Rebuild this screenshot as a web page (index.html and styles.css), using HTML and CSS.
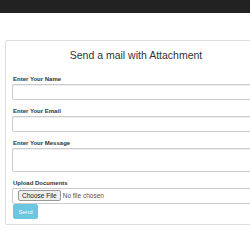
FILE: index.html
```html
<!DOCTYPE html>
<html lang="en">

<head>
    <meta charset="UTF-8">
    <meta name="viewport" content="width=device-width, initial-scale=1.0">
    <title>Send a mail with Attachment</title>
    <link rel="stylesheet" href="styles.css">
</head>

<body>
    <div class="navbar"></div>

    <div class="panel">
        <h3>Send a mail with Attachment</h3>

        <form class="mail-form">
            <div class="form-group">
                <label for="name">Enter Your Name</label>
                <input type="text" id="name" class="form-control">
            </div>

            <div class="form-group">
                <label for="email">Enter Your Email</label>
                <input type="text" id="email" class="form-control">
            </div>

            <div class="form-group">
                <label for="message">Enter Your Message</label>
                <textarea id="message" class="form-control message"></textarea>
            </div>

            <div class="form-group upload">
                <label for="attachment">Upload Documents</label>
                <input type="file" id="attachment" class="form-control file">
            </div>

            <button type="button" class="btn-send">Send</button>
        </form>
    </div>
</body>

</html>
```

FILE: styles.css
```css
* {
    box-sizing: border-box;
    font-family: 'Liberation Sans', Arial, sans-serif;
}

html,
body {
    overflow: hidden;
}

body {
    margin: 0;
    padding: 0;
    background-color: #fff;
    color: #333;
}

.navbar {
    height: 13px;
    background-color: #222;
}

.panel {
    width: 262px;
    margin: 27px 0 0 5px;
    padding: 7px 6px 5px 6px;
    border: 1px solid #ddd;
    border-radius: 2px;
}

h3 {
    margin: 0 0 14px 0;
    font-size: 10.5px;
    font-weight: normal;
    line-height: 14px;
    text-align: center;
    color: #333;
}

.form-group {
    margin-bottom: 8px;
}

.form-group.upload {
    margin-bottom: 0;
}

label {
    display: block;
    margin: 0 0 1px 1px;
    font-size: 6px;
    font-weight: bold;
    line-height: 7px;
    color: #333;
}

.form-control {
    display: block;
    width: 100%;
    height: 16px;
    padding: 2px 4px;
    border: 1px solid #ccc;
    border-radius: 2px;
    background-color: #fff;
    box-shadow: inset 0 1px 1px rgba(0, 0, 0, 0.075);
    font-size: 6px;
}

.message {
    height: 24px;
    resize: none;
}

.file {
    height: 16px;
    padding: 1px 5px;
    font-size: 6.5px;
    color: #555;
    box-shadow: none;
}

.file::file-selector-button {
    margin-right: 2px;
    padding: 1px 3px;
    border: 1px solid #999;
    border-radius: 2px;
    background-color: #efefef;
    color: #222;
    font-size: 6.5px;
}

.btn-send {
    display: block;
    width: 25px;
    height: 15px;
    margin: 0 0 0 1px;
    padding: 0;
    border: 1px solid #5bc0de;
    border-radius: 2px;
    background-color: #5bc0de;
    color: #fff;
    font-size: 6px;
    opacity: 0.9;
    cursor: pointer;
}
```
